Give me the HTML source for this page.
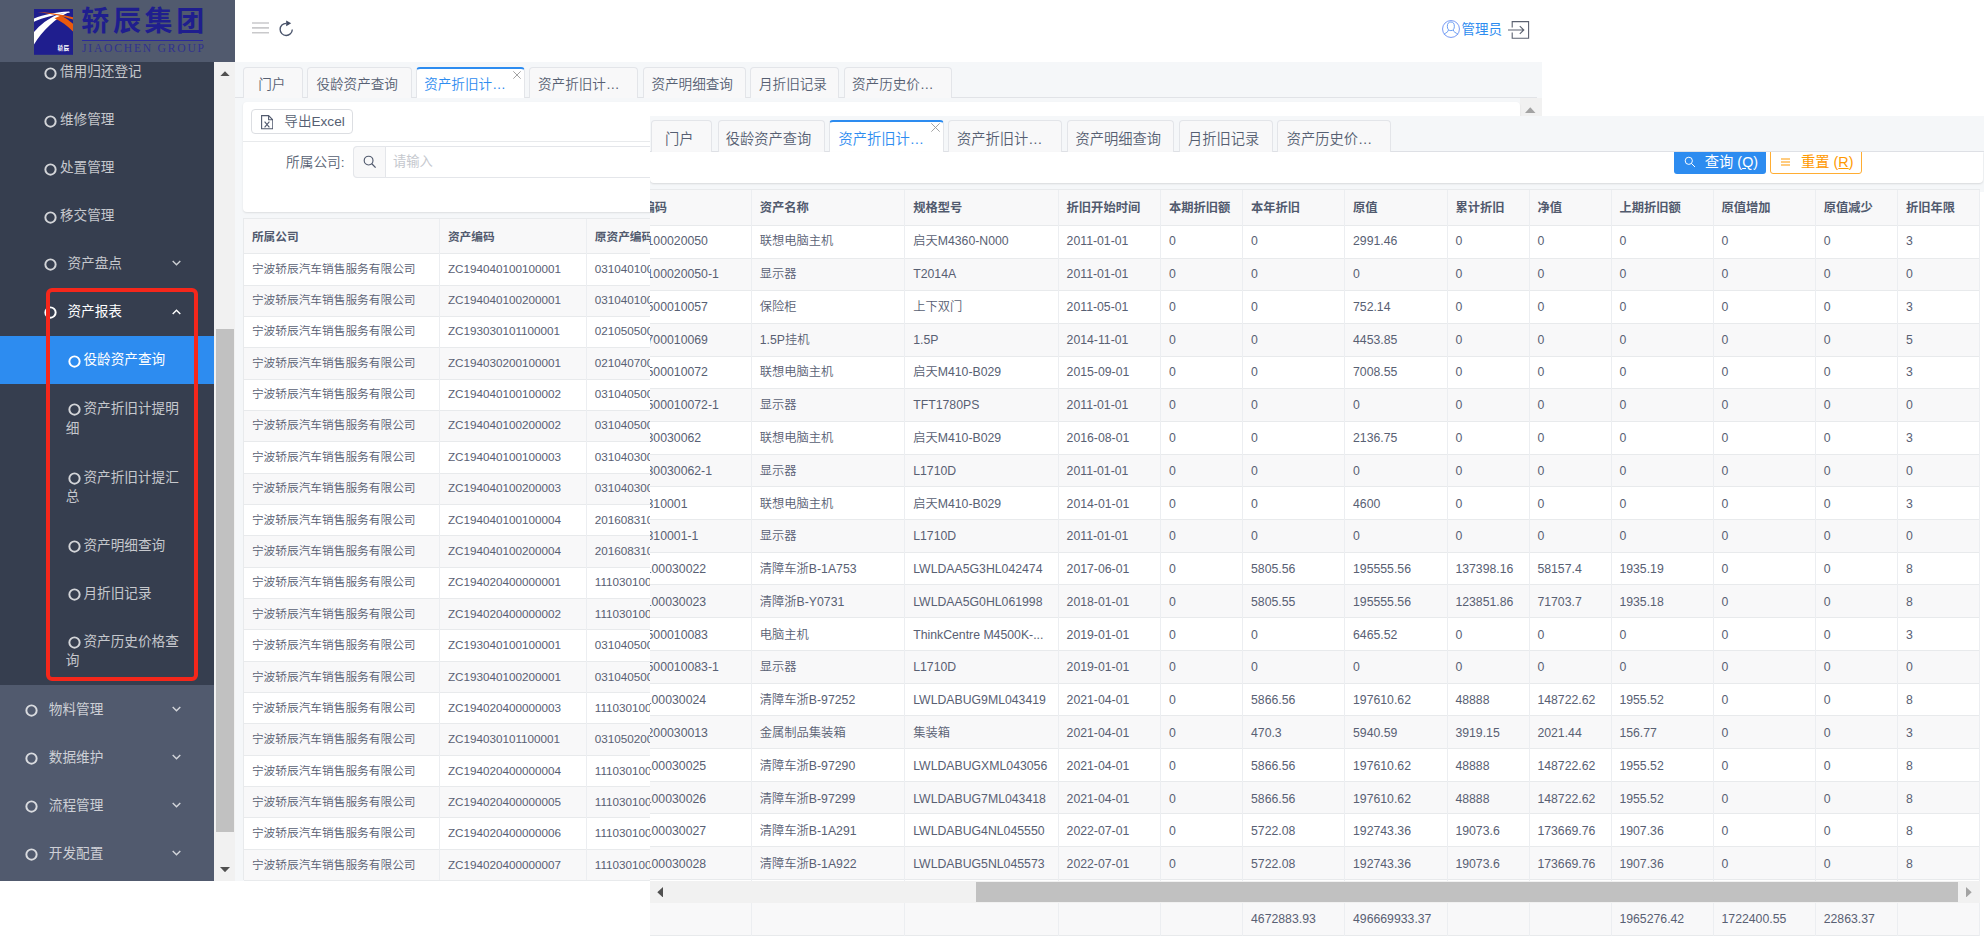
<!DOCTYPE html><html lang="zh-CN"><head><meta charset="utf-8"><title>资产折旧计提明细</title><style>
*{box-sizing:border-box;margin:0;padding:0}
html,body{width:1985px;height:938px;overflow:hidden;background:#fff}
body{position:relative;font-family:"Liberation Sans","Noto Sans CJK SC",sans-serif;color:#515a6e;-webkit-font-smoothing:antialiased}
.abs{position:absolute}
#L{position:absolute;left:0;top:0;width:1542px;height:880.6px;overflow:hidden;background:#f5f7f9}
#R{position:absolute;left:650px;top:116px;width:1334px;height:822px;overflow:hidden;background:#fff}
.lt{font-weight:350;color:#586073}
.lt b,.hd{font-weight:700;color:#515a6e}
.logo{position:absolute;left:0;top:0;width:235px;height:62px;background:#515a6e}
.side{position:absolute;left:0;top:62px;width:214.2px;height:819px;background:#363e4f;overflow:hidden}
.side .lv1bg{position:absolute;left:0;top:622.7px;width:100%;height:200px;background:#515a6e}
.mi{position:absolute;left:0;width:214.2px;color:rgba(255,255,255,.72);font-size:13.65px;line-height:20px;white-space:nowrap}
.mi .c{position:absolute;width:12px;height:12px;border:1.7px solid rgba(255,255,255,.75);border-radius:50%}
.mi .t{position:absolute}
.mi svg{position:absolute}
.sscroll{position:absolute;left:214.2px;top:62px;width:20.8px;height:819px;background:#f1f1f1}
.topbar{position:absolute;left:235px;top:0;width:1307px;height:62px;background:#fff}
.tabbar{position:absolute;background:#f5f7f9}
.tab{position:absolute;background:#f8f8f9;border:1px solid #e3e5e9;border-bottom:none;border-radius:4px 4px 0 0;color:#565f72;font-weight:350;white-space:nowrap}
.tab.on{background:#fff;color:#2d8cf0;border-color:#e3e5e9;border-top:2px solid #2d8cf0}
.tab span{position:absolute;top:0}
.cell{position:absolute;white-space:nowrap;overflow:hidden}
</style></head><body>
<div id="L">
<div class="logo">
<svg class="abs" style="left:34px;top:8.8px" width="39.4" height="45.8" viewBox="0 0 39.4 45.8">
<rect width="39.4" height="45.8" fill="#1f1e8e"/>
<path d="M0 23 C6 16 14 9.5 24 5.5 L36 2.8 C22 8.5 8 22 0 35.5 Z" fill="#fff"/>
<path d="M0 9.6 C10 5.5 22 3.4 35 2.6 L36 3.4 C22 5 9 8.5 0 12.8 Z" fill="#fff"/>
<path d="M3.4 3 C14 3.4 28 5.4 39.4 8.4 L39.4 10.6 C30 7.6 18 5 3.4 3Z" fill="#ea5a0c"/>
<path d="M20.5 9.2 L27 6.4 C32 9 36 12 39.4 15.2 L39.4 23 C34 17 27 12 20.5 9.2 Z" fill="#ea5a0c"/>
<text x="23.6" y="40.8" font-size="5.6" font-weight="700" fill="#fff" font-family='"Liberation Sans","Noto Sans CJK SC",sans-serif' textLength="11.5">轿辰</text>
</svg>
<div class="abs" style="left:81.2px;top:3.2px;width:130px;height:38px;font-family:&quot;Liberation Sans&quot;,&quot;Noto Sans CJK SC&quot;,sans-serif;font-weight:700;font-size:28px;line-height:38px;color:#1f1e8e;letter-spacing:3.7px;white-space:nowrap">轿辰集团</div>
<div class="abs" style="left:82px;top:40.2px;width:121px;height:0.8px;background:#2a2a9a"></div>
<div class="abs" style="left:82px;top:42.1px;width:130px;height:14px;font-family:&quot;Liberation Serif&quot;,serif;font-size:11.6px;line-height:14px;color:#2b2b96;letter-spacing:1.78px;white-space:nowrap;opacity:.85">JIAOCHEN GROUP</div>
</div>
<div class="side"><div class="lv1bg"></div>
<div class="mi" style="top:-14.5px;height:48.0px;"><svg style="left:44.4px;top:19.1px" width="13" height="13" viewBox="0 0 13 13"><circle cx="6.5" cy="6.5" r="5.15" fill="none" stroke="rgba(255,255,255,.78)" stroke-width="1.95"/></svg><span class="t" style="left:59.9px;top:14.8px">借用归还登记</span></div>
<div class="mi" style="top:33.5px;height:48.0px;"><svg style="left:44.4px;top:19.1px" width="13" height="13" viewBox="0 0 13 13"><circle cx="6.5" cy="6.5" r="5.15" fill="none" stroke="rgba(255,255,255,.78)" stroke-width="1.95"/></svg><span class="t" style="left:59.9px;top:14.8px">维修管理</span></div>
<div class="mi" style="top:81.5px;height:48.0px;"><svg style="left:44.4px;top:19.1px" width="13" height="13" viewBox="0 0 13 13"><circle cx="6.5" cy="6.5" r="5.15" fill="none" stroke="rgba(255,255,255,.78)" stroke-width="1.95"/></svg><span class="t" style="left:59.9px;top:14.8px">处置管理</span></div>
<div class="mi" style="top:129.5px;height:48.0px;"><svg style="left:44.4px;top:19.1px" width="13" height="13" viewBox="0 0 13 13"><circle cx="6.5" cy="6.5" r="5.15" fill="none" stroke="rgba(255,255,255,.78)" stroke-width="1.95"/></svg><span class="t" style="left:59.9px;top:14.8px">移交管理</span></div>
<div class="mi" style="top:177.5px;height:48.0px;"><svg style="left:44.2px;top:18.8px" width="13" height="13" viewBox="0 0 13 13"><circle cx="6.5" cy="6.5" r="5.15" fill="none" stroke="rgba(255,255,255,.78)" stroke-width="1.95"/></svg><span class="t" style="left:67.4px;top:14.8px">资产盘点</span><svg style="left:171.6px;top:20.8px" width="9" height="6" viewBox="0 0 9 6"><path d="M0.7 0.9 L4.5 4.7 L8.3 0.9" fill="none" stroke="rgba(255,255,255,.75)" stroke-width="1.4"/></svg></div>
<div class="mi" style="top:225.5px;height:48.0px;color:#fff"><svg style="left:44.2px;top:18.8px" width="13" height="13" viewBox="0 0 13 13"><circle cx="6.5" cy="6.5" r="5.15" fill="none" stroke="#fff" stroke-width="1.95"/></svg><span class="t" style="left:67.4px;top:14.8px">资产报表</span><svg style="left:171.6px;top:21.3px" width="9" height="6" viewBox="0 0 9 6"><path d="M0.7 5.1 L4.5 1.3 L8.3 5.1" fill="none" stroke="#fff" stroke-width="1.4"/></svg></div>
<div class="mi" style="top:273.7px;height:48.2px;background:#2d8cf0;color:#fff;"><svg style="left:67.5px;top:19.1px" width="13" height="13" viewBox="0 0 13 13"><circle cx="6.5" cy="6.5" r="5.15" fill="none" stroke="#fff" stroke-width="1.95"/></svg><span class="t" style="left:83.4px;top:14.8px">役龄资产查询</span></div>
<div class="mi" style="top:322.2px;height:68.0px;"><svg style="left:67.5px;top:19.1px" width="13" height="13" viewBox="0 0 13 13"><circle cx="6.5" cy="6.5" r="5.15" fill="none" stroke="rgba(255,255,255,.78)" stroke-width="1.95"/></svg><span class="t" style="left:83.4px;top:14.8px">资产折旧计提明</span><span class="t" style="left:65.7px;top:34.4px">细</span></div>
<div class="mi" style="top:390.8px;height:68.0px;"><svg style="left:67.5px;top:19.1px" width="13" height="13" viewBox="0 0 13 13"><circle cx="6.5" cy="6.5" r="5.15" fill="none" stroke="rgba(255,255,255,.78)" stroke-width="1.95"/></svg><span class="t" style="left:83.4px;top:14.8px">资产折旧计提汇</span><span class="t" style="left:65.7px;top:34.4px">总</span></div>
<div class="mi" style="top:459.4px;height:48.0px;"><svg style="left:67.5px;top:19.1px" width="13" height="13" viewBox="0 0 13 13"><circle cx="6.5" cy="6.5" r="5.15" fill="none" stroke="rgba(255,255,255,.78)" stroke-width="1.95"/></svg><span class="t" style="left:83.4px;top:14.8px">资产明细查询</span></div>
<div class="mi" style="top:507.2px;height:48.0px;"><svg style="left:67.5px;top:19.1px" width="13" height="13" viewBox="0 0 13 13"><circle cx="6.5" cy="6.5" r="5.15" fill="none" stroke="rgba(255,255,255,.78)" stroke-width="1.95"/></svg><span class="t" style="left:83.4px;top:14.8px">月折旧记录</span></div>
<div class="mi" style="top:555.1px;height:68.0px;"><svg style="left:67.5px;top:19.1px" width="13" height="13" viewBox="0 0 13 13"><circle cx="6.5" cy="6.5" r="5.15" fill="none" stroke="rgba(255,255,255,.78)" stroke-width="1.95"/></svg><span class="t" style="left:83.4px;top:14.8px">资产历史价格查</span><span class="t" style="left:65.7px;top:34.4px">询</span></div>
<div class="mi" style="top:623.2px;height:48.0px;"><svg style="left:25.3px;top:19.1px" width="13" height="13" viewBox="0 0 13 13"><circle cx="6.5" cy="6.5" r="5.15" fill="none" stroke="rgba(255,255,255,.78)" stroke-width="1.95"/></svg><span class="t" style="left:48.8px;top:14.6px">物料管理</span><svg style="left:171.6px;top:21.2px" width="9" height="6" viewBox="0 0 9 6"><path d="M0.7 0.9 L4.5 4.7 L8.3 0.9" fill="none" stroke="rgba(255,255,255,.75)" stroke-width="1.4"/></svg></div>
<div class="mi" style="top:671.2px;height:48.0px;"><svg style="left:25.3px;top:19.1px" width="13" height="13" viewBox="0 0 13 13"><circle cx="6.5" cy="6.5" r="5.15" fill="none" stroke="rgba(255,255,255,.78)" stroke-width="1.95"/></svg><span class="t" style="left:48.8px;top:14.6px">数据维护</span><svg style="left:171.6px;top:21.2px" width="9" height="6" viewBox="0 0 9 6"><path d="M0.7 0.9 L4.5 4.7 L8.3 0.9" fill="none" stroke="rgba(255,255,255,.75)" stroke-width="1.4"/></svg></div>
<div class="mi" style="top:719.2px;height:48.0px;"><svg style="left:25.3px;top:19.1px" width="13" height="13" viewBox="0 0 13 13"><circle cx="6.5" cy="6.5" r="5.15" fill="none" stroke="rgba(255,255,255,.78)" stroke-width="1.95"/></svg><span class="t" style="left:48.8px;top:14.6px">流程管理</span><svg style="left:171.6px;top:21.2px" width="9" height="6" viewBox="0 0 9 6"><path d="M0.7 0.9 L4.5 4.7 L8.3 0.9" fill="none" stroke="rgba(255,255,255,.75)" stroke-width="1.4"/></svg></div>
<div class="mi" style="top:767.2px;height:48.0px;"><svg style="left:25.3px;top:19.1px" width="13" height="13" viewBox="0 0 13 13"><circle cx="6.5" cy="6.5" r="5.15" fill="none" stroke="rgba(255,255,255,.78)" stroke-width="1.95"/></svg><span class="t" style="left:48.8px;top:14.6px">开发配置</span><svg style="left:171.6px;top:21.2px" width="9" height="6" viewBox="0 0 9 6"><path d="M0.7 0.9 L4.5 4.7 L8.3 0.9" fill="none" stroke="rgba(255,255,255,.75)" stroke-width="1.4"/></svg></div>
<div class="abs" style="left:46.2px;top:226.4px;width:151.4px;height:392.8px;border:4px solid #f5271b;border-radius:6px"></div>
</div>
<div class="sscroll">
<div class="abs" style="left:1.8px;top:267px;width:17.6px;height:503px;background:#c1c1c1"></div>
<svg class="abs" style="left:5.6px;top:8.7px" width="10" height="5.4"><path d="M0 5.4 L5 0.2 L10 5.4Z" fill="#505050"/></svg>
<svg class="abs" style="left:5.6px;top:804.8px" width="10" height="5.4"><path d="M0 0 L5 5.2 L10 0Z" fill="#505050"/></svg>
</div>
<div class="topbar">
<svg class="abs" style="left:16.9px;top:22.4px" width="17.3" height="12" viewBox="0 0 17.3 12"><path d="M0 1 H17.3 M0 5.85 H17.3 M0 10.8 H17.3" stroke="#c9c9cb" stroke-width="1.6"/></svg>
<svg class="abs" style="left:40px;top:14px" width="24" height="30" viewBox="275 14 24 30"><path d="M286.2 23.3 A6.1 6.1 0 1 0 292.3 29.6" fill="none" stroke="#4a546b" stroke-width="1.35"/><path d="M286.2 20.4 L286.2 26.3 L291.2 23.35Z" fill="#414b63"/></svg>
<svg class="abs" style="left:1206.9px;top:20px" width="18" height="18" viewBox="0 0 18 18"><circle cx="9" cy="9" r="8.45" fill="none" stroke="#6a8ef2" stroke-width="0.9"/><ellipse cx="8.85" cy="6.3" rx="3.5" ry="4.3" fill="none" stroke="#5b93f2" stroke-width="0.9"/><path d="M6.4 10 C6.4 12 4 12.6 1.9 14.4 M11.3 10 C11.3 12 13.8 12.6 16.1 14.4" fill="none" stroke="#5b93f2" stroke-width="0.9"/></svg>
<div class="abs" style="left:1226.6px;top:20px;font-size:13.5px;line-height:20px;color:#2d8cf0;white-space:nowrap">管理员</div>
<svg class="abs" style="left:1273px;top:21px" width="22" height="18" viewBox="0 0 22 18"><path d="M4.2 6.5 V0.6 H20.6 V17.2 H4.2 V11.6" fill="none" stroke="#5b6170" stroke-width="1.1"/><path d="M0 9 H15.6 M11.8 5.2 L15.8 9 L11.8 12.8" fill="none" stroke="#5b6170" stroke-width="1.1"/></svg>
</div>
<div class="tabbar" style="left:235px;top:62px;width:1307px;height:39.8px">
<div class="abs" style="left:0;top:35.2px;width:1302px;height:1px;background:#e1e3e7"></div>
<div class="tab" style="left:8.0px;top:5.3px;width:60.3px;height:30.4px;font-size:13.6px;line-height:20px"><span style="left:14.2px;top:6.9px">门户</span></div>
<div class="tab" style="left:72.1px;top:5.3px;width:104.7px;height:30.4px;font-size:13.6px;line-height:20px"><span style="left:8.3px;top:6.9px">役龄资产查询</span></div>
<div class="tab on" style="left:180.5px;top:5.3px;width:109.5px;height:30.4px;font-size:13.6px;line-height:20px"><span style="left:7.7px;top:5.9px">资产折旧计…</span><svg class="abs" style="left:96.5px;top:1.6px" width="8" height="8" viewBox="0 0 8 8"><path d="M0.3 0.3 L7.7 7.7 M7.7 0.3 L0.3 7.7" stroke="#999" stroke-width="0.9"/></svg></div>
<div class="tab" style="left:294.3px;top:5.3px;width:108.7px;height:30.4px;font-size:13.6px;line-height:20px"><span style="left:7.7px;top:6.9px">资产折旧计…</span></div>
<div class="tab" style="left:407.5px;top:5.3px;width:103.3px;height:30.4px;font-size:13.6px;line-height:20px"><span style="left:7.9px;top:6.9px">资产明细查询</span></div>
<div class="tab" style="left:515.3px;top:5.3px;width:89.2px;height:30.4px;font-size:13.6px;line-height:20px"><span style="left:7.7px;top:6.9px">月折旧记录</span></div>
<div class="tab" style="left:608.8px;top:5.3px;width:108.5px;height:30.4px;font-size:13.6px;line-height:20px"><span style="left:7.2px;top:6.9px">资产历史价…</span></div>
</div>
<div class="abs" style="left:1520px;top:98px;width:22px;height:790px;background:#f1f1f1"></div>
<svg class="abs" style="left:1525.3px;top:106.5px" width="10.5" height="6"><path d="M0 6 L5.25 0.3 L10.5 6Z" fill="#a3a3a3"/></svg>
<div class="abs" style="left:243px;top:101.8px;width:1277px;height:110.6px;background:#fff;border-radius:4px;box-shadow:0 1px 2px rgba(0,0,0,.10)">
<div class="abs" style="left:8.2px;top:7.6px;width:101.5px;height:24.4px;border:1px solid #dcdee2;border-radius:4px;background:#fff"></div>
<svg class="abs" style="left:18px;top:13.4px" width="12.4" height="14.4" viewBox="0 0 12.4 14.4"><path d="M0.6 0.6 H7.6 L11.8 4.8 V13.8 H0.6Z M7.6 0.6 V4.8 H11.8" fill="none" stroke="#515a6e" stroke-width="1.1"/><path d="M3.6 6.6 L8.4 12.4 M8.4 6.6 L3.6 12.4" stroke="#515a6e" stroke-width="1.1"/></svg>
<div class="abs" style="left:41.3px;top:10.3px;font-size:13.6px;line-height:20px;color:#565f72;font-weight:350;white-space:nowrap">导出Excel</div>
<div class="abs" style="left:0;top:39.3px;width:100%;height:1px;background:#e8eaec"></div>
<div class="abs" style="left:43px;top:51px;font-size:13.7px;line-height:20px;color:#565f72;font-weight:350;white-space:nowrap">所属公司:</div>
<div class="abs" style="left:110px;top:44.2px;width:420px;height:31.6px;border:1px solid #e4e6ea;border-radius:4px;background:#fff"></div>
<div class="abs" style="left:110px;top:44.2px;width:32.6px;height:31.6px;border:1px solid #e4e6ea;border-radius:4px 0 0 4px;background:#f8f8f9"></div>
<svg class="abs" style="left:119.5px;top:52.8px" width="14" height="14" viewBox="0 0 14 14"><circle cx="5.6" cy="5.6" r="4.4" fill="none" stroke="#515a6e" stroke-width="1.15"/><path d="M8.8 8.8 L12.6 12.6" stroke="#515a6e" stroke-width="1.3"/></svg>
<div class="abs" style="left:150px;top:50px;font-size:13.3px;line-height:20px;color:#c5c8ce;white-space:nowrap">请输入</div>
</div>
<div class="abs lt" style="left:243.2px;top:218.4px;width:1276px;height:662px;background:#fff;border-left:1px solid #e8eaec;border-top:1px solid #e8eaec;font-size:11.7px">
<div class="abs" style="left:0;top:0;width:100%;height:35.0px;background:#f8f8f9;border-bottom:1px solid #e8eaec"></div>
<div class="cell" style="left:-0.5px;top:0;width:196.0px;height:35.0px;line-height:35.0px;font-weight:700;color:#515a6e;padding-left:8.2px">所属公司</div>
<div class="cell" style="left:195.5px;top:0;width:146.9px;height:35.0px;line-height:35.0px;font-weight:700;color:#515a6e;padding-left:8.2px">资产编码</div>
<div class="cell" style="left:342.4px;top:0;width:146.4px;height:35.0px;line-height:35.0px;font-weight:700;color:#515a6e;padding-left:8.2px">原资产编码</div>
<div class="abs" style="left:0;top:35.00px;width:100%;height:31.34px;background:#fff;border-bottom:1px solid #e8eaec"></div>
<div class="cell" style="left:-0.5px;top:39.20px;width:196.0px;height:20.00px;line-height:20.00px;padding-left:8.2px">宁波轿辰汽车销售服务有限公司</div>
<div class="cell" style="left:195.5px;top:39.20px;width:146.9px;height:20.00px;line-height:20.00px;padding-left:8.2px">ZC194040100100001</div>
<div class="cell" style="left:342.4px;top:39.20px;width:146.4px;height:20.00px;line-height:20.00px;padding-left:8.2px">031040100020050</div>
<div class="abs" style="left:0;top:66.34px;width:100%;height:31.34px;background:#f8f8f9;border-bottom:1px solid #e8eaec"></div>
<div class="cell" style="left:-0.5px;top:70.58px;width:196.0px;height:20.00px;line-height:20.00px;padding-left:8.2px">宁波轿辰汽车销售服务有限公司</div>
<div class="cell" style="left:195.5px;top:70.58px;width:146.9px;height:20.00px;line-height:20.00px;padding-left:8.2px">ZC194040100200001</div>
<div class="cell" style="left:342.4px;top:70.58px;width:146.4px;height:20.00px;line-height:20.00px;padding-left:8.2px">031040100020050-1</div>
<div class="abs" style="left:0;top:97.68px;width:100%;height:31.34px;background:#fff;border-bottom:1px solid #e8eaec"></div>
<div class="cell" style="left:-0.5px;top:101.96px;width:196.0px;height:20.00px;line-height:20.00px;padding-left:8.2px">宁波轿辰汽车销售服务有限公司</div>
<div class="cell" style="left:195.5px;top:101.96px;width:146.9px;height:20.00px;line-height:20.00px;padding-left:8.2px">ZC193030101100001</div>
<div class="cell" style="left:342.4px;top:101.96px;width:146.4px;height:20.00px;line-height:20.00px;padding-left:8.2px">021050500010057</div>
<div class="abs" style="left:0;top:129.02px;width:100%;height:31.34px;background:#f8f8f9;border-bottom:1px solid #e8eaec"></div>
<div class="cell" style="left:-0.5px;top:133.34px;width:196.0px;height:20.00px;line-height:20.00px;padding-left:8.2px">宁波轿辰汽车销售服务有限公司</div>
<div class="cell" style="left:195.5px;top:133.34px;width:146.9px;height:20.00px;line-height:20.00px;padding-left:8.2px">ZC194030200100001</div>
<div class="cell" style="left:342.4px;top:133.34px;width:146.4px;height:20.00px;line-height:20.00px;padding-left:8.2px">021040700010069</div>
<div class="abs" style="left:0;top:160.36px;width:100%;height:31.34px;background:#fff;border-bottom:1px solid #e8eaec"></div>
<div class="cell" style="left:-0.5px;top:164.72px;width:196.0px;height:20.00px;line-height:20.00px;padding-left:8.2px">宁波轿辰汽车销售服务有限公司</div>
<div class="cell" style="left:195.5px;top:164.72px;width:146.9px;height:20.00px;line-height:20.00px;padding-left:8.2px">ZC194040100100002</div>
<div class="cell" style="left:342.4px;top:164.72px;width:146.4px;height:20.00px;line-height:20.00px;padding-left:8.2px">031040500010072</div>
<div class="abs" style="left:0;top:191.70px;width:100%;height:31.34px;background:#f8f8f9;border-bottom:1px solid #e8eaec"></div>
<div class="cell" style="left:-0.5px;top:196.10px;width:196.0px;height:20.00px;line-height:20.00px;padding-left:8.2px">宁波轿辰汽车销售服务有限公司</div>
<div class="cell" style="left:195.5px;top:196.10px;width:146.9px;height:20.00px;line-height:20.00px;padding-left:8.2px">ZC194040100200002</div>
<div class="cell" style="left:342.4px;top:196.10px;width:146.4px;height:20.00px;line-height:20.00px;padding-left:8.2px">031040500010072-1</div>
<div class="abs" style="left:0;top:223.04px;width:100%;height:31.34px;background:#fff;border-bottom:1px solid #e8eaec"></div>
<div class="cell" style="left:-0.5px;top:227.48px;width:196.0px;height:20.00px;line-height:20.00px;padding-left:8.2px">宁波轿辰汽车销售服务有限公司</div>
<div class="cell" style="left:195.5px;top:227.48px;width:146.9px;height:20.00px;line-height:20.00px;padding-left:8.2px">ZC194040100100003</div>
<div class="cell" style="left:342.4px;top:227.48px;width:146.4px;height:20.00px;line-height:20.00px;padding-left:8.2px">03104030030062</div>
<div class="abs" style="left:0;top:254.38px;width:100%;height:31.34px;background:#f8f8f9;border-bottom:1px solid #e8eaec"></div>
<div class="cell" style="left:-0.5px;top:258.86px;width:196.0px;height:20.00px;line-height:20.00px;padding-left:8.2px">宁波轿辰汽车销售服务有限公司</div>
<div class="cell" style="left:195.5px;top:258.86px;width:146.9px;height:20.00px;line-height:20.00px;padding-left:8.2px">ZC194040100200003</div>
<div class="cell" style="left:342.4px;top:258.86px;width:146.4px;height:20.00px;line-height:20.00px;padding-left:8.2px">03104030030062-1</div>
<div class="abs" style="left:0;top:285.72px;width:100%;height:31.34px;background:#fff;border-bottom:1px solid #e8eaec"></div>
<div class="cell" style="left:-0.5px;top:290.24px;width:196.0px;height:20.00px;line-height:20.00px;padding-left:8.2px">宁波轿辰汽车销售服务有限公司</div>
<div class="cell" style="left:195.5px;top:290.24px;width:146.9px;height:20.00px;line-height:20.00px;padding-left:8.2px">ZC194040100100004</div>
<div class="cell" style="left:342.4px;top:290.24px;width:146.4px;height:20.00px;line-height:20.00px;padding-left:8.2px">201608310001</div>
<div class="abs" style="left:0;top:317.06px;width:100%;height:31.34px;background:#f8f8f9;border-bottom:1px solid #e8eaec"></div>
<div class="cell" style="left:-0.5px;top:321.62px;width:196.0px;height:20.00px;line-height:20.00px;padding-left:8.2px">宁波轿辰汽车销售服务有限公司</div>
<div class="cell" style="left:195.5px;top:321.62px;width:146.9px;height:20.00px;line-height:20.00px;padding-left:8.2px">ZC194040100200004</div>
<div class="cell" style="left:342.4px;top:321.62px;width:146.4px;height:20.00px;line-height:20.00px;padding-left:8.2px">201608310001-1</div>
<div class="abs" style="left:0;top:348.40px;width:100%;height:31.34px;background:#fff;border-bottom:1px solid #e8eaec"></div>
<div class="cell" style="left:-0.5px;top:353.00px;width:196.0px;height:20.00px;line-height:20.00px;padding-left:8.2px">宁波轿辰汽车销售服务有限公司</div>
<div class="cell" style="left:195.5px;top:353.00px;width:146.9px;height:20.00px;line-height:20.00px;padding-left:8.2px">ZC194020400000001</div>
<div class="cell" style="left:342.4px;top:353.00px;width:146.4px;height:20.00px;line-height:20.00px;padding-left:8.2px">111030100030022</div>
<div class="abs" style="left:0;top:379.74px;width:100%;height:31.34px;background:#f8f8f9;border-bottom:1px solid #e8eaec"></div>
<div class="cell" style="left:-0.5px;top:384.38px;width:196.0px;height:20.00px;line-height:20.00px;padding-left:8.2px">宁波轿辰汽车销售服务有限公司</div>
<div class="cell" style="left:195.5px;top:384.38px;width:146.9px;height:20.00px;line-height:20.00px;padding-left:8.2px">ZC194020400000002</div>
<div class="cell" style="left:342.4px;top:384.38px;width:146.4px;height:20.00px;line-height:20.00px;padding-left:8.2px">111030100030023</div>
<div class="abs" style="left:0;top:411.08px;width:100%;height:31.34px;background:#fff;border-bottom:1px solid #e8eaec"></div>
<div class="cell" style="left:-0.5px;top:415.76px;width:196.0px;height:20.00px;line-height:20.00px;padding-left:8.2px">宁波轿辰汽车销售服务有限公司</div>
<div class="cell" style="left:195.5px;top:415.76px;width:146.9px;height:20.00px;line-height:20.00px;padding-left:8.2px">ZC193040100100001</div>
<div class="cell" style="left:342.4px;top:415.76px;width:146.4px;height:20.00px;line-height:20.00px;padding-left:8.2px">031040500010083</div>
<div class="abs" style="left:0;top:442.42px;width:100%;height:31.34px;background:#f8f8f9;border-bottom:1px solid #e8eaec"></div>
<div class="cell" style="left:-0.5px;top:447.14px;width:196.0px;height:20.00px;line-height:20.00px;padding-left:8.2px">宁波轿辰汽车销售服务有限公司</div>
<div class="cell" style="left:195.5px;top:447.14px;width:146.9px;height:20.00px;line-height:20.00px;padding-left:8.2px">ZC193040100200001</div>
<div class="cell" style="left:342.4px;top:447.14px;width:146.4px;height:20.00px;line-height:20.00px;padding-left:8.2px">031040500010083-1</div>
<div class="abs" style="left:0;top:473.76px;width:100%;height:31.34px;background:#fff;border-bottom:1px solid #e8eaec"></div>
<div class="cell" style="left:-0.5px;top:478.52px;width:196.0px;height:20.00px;line-height:20.00px;padding-left:8.2px">宁波轿辰汽车销售服务有限公司</div>
<div class="cell" style="left:195.5px;top:478.52px;width:146.9px;height:20.00px;line-height:20.00px;padding-left:8.2px">ZC194020400000003</div>
<div class="cell" style="left:342.4px;top:478.52px;width:146.4px;height:20.00px;line-height:20.00px;padding-left:8.2px">111030100030024</div>
<div class="abs" style="left:0;top:505.10px;width:100%;height:31.34px;background:#f8f8f9;border-bottom:1px solid #e8eaec"></div>
<div class="cell" style="left:-0.5px;top:509.90px;width:196.0px;height:20.00px;line-height:20.00px;padding-left:8.2px">宁波轿辰汽车销售服务有限公司</div>
<div class="cell" style="left:195.5px;top:509.90px;width:146.9px;height:20.00px;line-height:20.00px;padding-left:8.2px">ZC194030101100001</div>
<div class="cell" style="left:342.4px;top:509.90px;width:146.4px;height:20.00px;line-height:20.00px;padding-left:8.2px">031050200030013</div>
<div class="abs" style="left:0;top:536.44px;width:100%;height:31.34px;background:#fff;border-bottom:1px solid #e8eaec"></div>
<div class="cell" style="left:-0.5px;top:541.28px;width:196.0px;height:20.00px;line-height:20.00px;padding-left:8.2px">宁波轿辰汽车销售服务有限公司</div>
<div class="cell" style="left:195.5px;top:541.28px;width:146.9px;height:20.00px;line-height:20.00px;padding-left:8.2px">ZC194020400000004</div>
<div class="cell" style="left:342.4px;top:541.28px;width:146.4px;height:20.00px;line-height:20.00px;padding-left:8.2px">111030100030025</div>
<div class="abs" style="left:0;top:567.78px;width:100%;height:31.34px;background:#f8f8f9;border-bottom:1px solid #e8eaec"></div>
<div class="cell" style="left:-0.5px;top:572.66px;width:196.0px;height:20.00px;line-height:20.00px;padding-left:8.2px">宁波轿辰汽车销售服务有限公司</div>
<div class="cell" style="left:195.5px;top:572.66px;width:146.9px;height:20.00px;line-height:20.00px;padding-left:8.2px">ZC194020400000005</div>
<div class="cell" style="left:342.4px;top:572.66px;width:146.4px;height:20.00px;line-height:20.00px;padding-left:8.2px">111030100030026</div>
<div class="abs" style="left:0;top:599.12px;width:100%;height:31.34px;background:#fff;border-bottom:1px solid #e8eaec"></div>
<div class="cell" style="left:-0.5px;top:604.04px;width:196.0px;height:20.00px;line-height:20.00px;padding-left:8.2px">宁波轿辰汽车销售服务有限公司</div>
<div class="cell" style="left:195.5px;top:604.04px;width:146.9px;height:20.00px;line-height:20.00px;padding-left:8.2px">ZC194020400000006</div>
<div class="cell" style="left:342.4px;top:604.04px;width:146.4px;height:20.00px;line-height:20.00px;padding-left:8.2px">111030100030027</div>
<div class="abs" style="left:0;top:630.46px;width:100%;height:31.34px;background:#f8f8f9;border-bottom:1px solid #e8eaec"></div>
<div class="cell" style="left:-0.5px;top:635.42px;width:196.0px;height:20.00px;line-height:20.00px;padding-left:8.2px">宁波轿辰汽车销售服务有限公司</div>
<div class="cell" style="left:195.5px;top:635.42px;width:146.9px;height:20.00px;line-height:20.00px;padding-left:8.2px">ZC194020400000007</div>
<div class="cell" style="left:342.4px;top:635.42px;width:146.4px;height:20.00px;line-height:20.00px;padding-left:8.2px">111030100030028</div>
<div class="abs" style="left:195.0px;top:0;width:1px;height:100%;background:#eceef1"></div>
<div class="abs" style="left:341.9px;top:0;width:1px;height:100%;background:#eceef1"></div>
<div class="abs" style="left:488.3px;top:0;width:1px;height:100%;background:#eceef1"></div>
</div>
</div>
<div id="R">
<div class="tabbar" style="left:0;top:0;width:1335px;height:35.6px">
<div class="abs" style="left:0;top:35px;width:1335px;height:1px;background:#dfe1e6"></div>
<div class="tab" style="left:0.5px;top:3.8px;width:61.4px;height:31.9px;font-size:14.25px;line-height:20px"><span style="left:13.5px;top:8.4px">门户</span></div>
<div class="tab" style="left:67.5px;top:3.8px;width:107.0px;height:31.9px;font-size:14.25px;line-height:20px"><span style="left:7.3px;top:8.4px">役龄资产查询</span></div>
<div class="tab on" style="left:179.4px;top:3.8px;width:114.3px;height:31.9px;font-size:14.25px;line-height:20px"><span style="left:8.1px;top:7.4px">资产折旧计…</span><svg class="abs" style="left:100.6px;top:1.6px" width="9" height="9" viewBox="0 0 9 9"><path d="M0.3 0.3 L8.7 8.7 M8.7 0.3 L0.3 8.7" stroke="#999" stroke-width="0.9"/></svg></div>
<div class="tab" style="left:298.2px;top:3.8px;width:114.1px;height:31.9px;font-size:14.25px;line-height:20px"><span style="left:7.7px;top:8.4px">资产折旧计…</span></div>
<div class="tab" style="left:416.6px;top:3.8px;width:107.7px;height:31.9px;font-size:14.25px;line-height:20px"><span style="left:8.0px;top:8.4px">资产明细查询</span></div>
<div class="tab" style="left:528.6px;top:3.8px;width:94.1px;height:31.9px;font-size:14.25px;line-height:20px"><span style="left:8.4px;top:8.4px">月折旧记录</span></div>
<div class="tab" style="left:626.7px;top:3.8px;width:114.8px;height:31.9px;font-size:14.25px;line-height:20px"><span style="left:9.0px;top:8.4px">资产历史价…</span></div>
</div>
<div class="abs" style="left:0;top:35.6px;width:1335px;height:40px;background:#f5f7f9"></div>
<div class="abs" style="left:0;top:35.6px;width:1333.3px;height:31.4px;background:#fff;border-radius:0 0 4px 4px;box-shadow:0 1px 2px rgba(0,0,0,.12)"></div>
<div class="abs" style="left:1024.2px;top:33px;width:92.2px;height:24.8px;background:#2d8cf0;border-radius:3px"></div>
<svg class="abs" style="left:1034px;top:39.6px" width="12" height="12" viewBox="0 0 12 12"><circle cx="4.8" cy="4.8" r="3.6" fill="none" stroke="#fff" stroke-width="1"/><path d="M7.4 7.4 L11 11" stroke="#fff" stroke-width="1"/></svg>
<div class="abs" style="left:1054.8px;top:36px;font-size:14.3px;line-height:20px;color:#fff;white-space:nowrap">查询 (<u>Q</u>)</div>
<div class="abs" style="left:1120.4px;top:33px;width:91.8px;height:24.8px;background:#fff;border:1px solid #ffad33;border-radius:3px"></div>
<svg class="abs" style="left:1130.6px;top:41.5px" width="9" height="8" viewBox="0 0 9 8"><path d="M0 1 H9 M0 4 H9 M0 7 H9" stroke="#ff9900" stroke-width="1"/></svg>
<div class="abs" style="left:1151px;top:36px;font-size:14.3px;line-height:20px;color:#ff9900;white-space:nowrap">重置 (<u>R</u>)</div>
<div class="abs" style="left:1000px;top:30px;width:240px;height:5px;background:#f5f7f9"></div>
<div class="abs" style="left:1000px;top:35px;width:240px;height:1px;background:#dfe1e6"></div>
<div class="abs lt" style="left:0;top:73.4px;width:1329.9px;height:746.6px;background:#fff;border-top:1px solid #e8eaec;font-size:12.27px">
<div class="abs" style="left:0;top:0;width:100%;height:35.6px;background:#f8f8f9;border-bottom:1px solid #e8eaec"></div>
<div class="cell" style="left:-52.8px;top:0;width:154.2px;height:35.6px;line-height:37.2px;font-weight:700;color:#515a6e;padding-left:8.4px">原资产编码</div>
<div class="cell" style="left:101.4px;top:0;width:153.4px;height:35.6px;line-height:37.2px;font-weight:700;color:#515a6e;padding-left:8.4px">资产名称</div>
<div class="cell" style="left:254.8px;top:0;width:153.4px;height:35.6px;line-height:37.2px;font-weight:700;color:#515a6e;padding-left:8.4px">规格型号</div>
<div class="cell" style="left:408.2px;top:0;width:102.3px;height:35.6px;line-height:37.2px;font-weight:700;color:#515a6e;padding-left:8.4px">折旧开始时间</div>
<div class="cell" style="left:510.5px;top:0;width:82.1px;height:35.6px;line-height:37.2px;font-weight:700;color:#515a6e;padding-left:8.4px">本期折旧额</div>
<div class="cell" style="left:592.6px;top:0;width:102.0px;height:35.6px;line-height:37.2px;font-weight:700;color:#515a6e;padding-left:8.4px">本年折旧</div>
<div class="cell" style="left:694.6px;top:0;width:102.4px;height:35.6px;line-height:37.2px;font-weight:700;color:#515a6e;padding-left:8.4px">原值</div>
<div class="cell" style="left:797.0px;top:0;width:82.0px;height:35.6px;line-height:37.2px;font-weight:700;color:#515a6e;padding-left:8.4px">累计折旧</div>
<div class="cell" style="left:879.0px;top:0;width:82.0px;height:35.6px;line-height:37.2px;font-weight:700;color:#515a6e;padding-left:8.4px">净值</div>
<div class="cell" style="left:961.0px;top:0;width:102.1px;height:35.6px;line-height:37.2px;font-weight:700;color:#515a6e;padding-left:8.4px">上期折旧额</div>
<div class="cell" style="left:1063.1px;top:0;width:102.2px;height:35.6px;line-height:37.2px;font-weight:700;color:#515a6e;padding-left:8.4px">原值增加</div>
<div class="cell" style="left:1165.3px;top:0;width:82.2px;height:35.6px;line-height:37.2px;font-weight:700;color:#515a6e;padding-left:8.4px">原值减少</div>
<div class="cell" style="left:1247.5px;top:0;width:81.9px;height:35.6px;line-height:37.2px;font-weight:700;color:#515a6e;padding-left:8.4px">折旧年限</div>
<div class="abs" style="left:0;top:35.60px;width:100%;height:32.68px;background:#fff;border-bottom:1px solid #e8eaec"></div>
<div class="cell" style="left:-52.8px;top:41.00px;width:150.2px;height:20.00px;line-height:20.00px;padding-left:8.4px">031040100020050</div>
<div class="cell" style="left:101.4px;top:41.00px;width:149.4px;height:20.00px;line-height:20.00px;padding-left:8.4px">联想电脑主机</div>
<div class="cell" style="left:254.8px;top:41.00px;width:149.4px;height:20.00px;line-height:20.00px;padding-left:8.4px">启天M4360-N000</div>
<div class="cell" style="left:408.2px;top:41.00px;width:98.3px;height:20.00px;line-height:20.00px;padding-left:8.4px">2011-01-01</div>
<div class="cell" style="left:510.5px;top:41.00px;width:78.1px;height:20.00px;line-height:20.00px;padding-left:8.4px">0</div>
<div class="cell" style="left:592.6px;top:41.00px;width:98.0px;height:20.00px;line-height:20.00px;padding-left:8.4px">0</div>
<div class="cell" style="left:694.6px;top:41.00px;width:98.4px;height:20.00px;line-height:20.00px;padding-left:8.4px">2991.46</div>
<div class="cell" style="left:797.0px;top:41.00px;width:78.0px;height:20.00px;line-height:20.00px;padding-left:8.4px">0</div>
<div class="cell" style="left:879.0px;top:41.00px;width:78.0px;height:20.00px;line-height:20.00px;padding-left:8.4px">0</div>
<div class="cell" style="left:961.0px;top:41.00px;width:98.1px;height:20.00px;line-height:20.00px;padding-left:8.4px">0</div>
<div class="cell" style="left:1063.1px;top:41.00px;width:98.2px;height:20.00px;line-height:20.00px;padding-left:8.4px">0</div>
<div class="cell" style="left:1165.3px;top:41.00px;width:78.2px;height:20.00px;line-height:20.00px;padding-left:8.4px">0</div>
<div class="cell" style="left:1247.5px;top:41.00px;width:77.9px;height:20.00px;line-height:20.00px;padding-left:8.4px">3</div>
<div class="abs" style="left:0;top:68.28px;width:100%;height:32.68px;background:#f8f8f9;border-bottom:1px solid #e8eaec"></div>
<div class="cell" style="left:-52.8px;top:73.77px;width:150.2px;height:20.00px;line-height:20.00px;padding-left:8.4px">031040100020050-1</div>
<div class="cell" style="left:101.4px;top:73.77px;width:149.4px;height:20.00px;line-height:20.00px;padding-left:8.4px">显示器</div>
<div class="cell" style="left:254.8px;top:73.77px;width:149.4px;height:20.00px;line-height:20.00px;padding-left:8.4px">T2014A</div>
<div class="cell" style="left:408.2px;top:73.77px;width:98.3px;height:20.00px;line-height:20.00px;padding-left:8.4px">2011-01-01</div>
<div class="cell" style="left:510.5px;top:73.77px;width:78.1px;height:20.00px;line-height:20.00px;padding-left:8.4px">0</div>
<div class="cell" style="left:592.6px;top:73.77px;width:98.0px;height:20.00px;line-height:20.00px;padding-left:8.4px">0</div>
<div class="cell" style="left:694.6px;top:73.77px;width:98.4px;height:20.00px;line-height:20.00px;padding-left:8.4px">0</div>
<div class="cell" style="left:797.0px;top:73.77px;width:78.0px;height:20.00px;line-height:20.00px;padding-left:8.4px">0</div>
<div class="cell" style="left:879.0px;top:73.77px;width:78.0px;height:20.00px;line-height:20.00px;padding-left:8.4px">0</div>
<div class="cell" style="left:961.0px;top:73.77px;width:98.1px;height:20.00px;line-height:20.00px;padding-left:8.4px">0</div>
<div class="cell" style="left:1063.1px;top:73.77px;width:98.2px;height:20.00px;line-height:20.00px;padding-left:8.4px">0</div>
<div class="cell" style="left:1165.3px;top:73.77px;width:78.2px;height:20.00px;line-height:20.00px;padding-left:8.4px">0</div>
<div class="cell" style="left:1247.5px;top:73.77px;width:77.9px;height:20.00px;line-height:20.00px;padding-left:8.4px">0</div>
<div class="abs" style="left:0;top:100.96px;width:100%;height:32.68px;background:#fff;border-bottom:1px solid #e8eaec"></div>
<div class="cell" style="left:-52.8px;top:106.55px;width:150.2px;height:20.00px;line-height:20.00px;padding-left:8.4px">021050500010057</div>
<div class="cell" style="left:101.4px;top:106.55px;width:149.4px;height:20.00px;line-height:20.00px;padding-left:8.4px">保险柜</div>
<div class="cell" style="left:254.8px;top:106.55px;width:149.4px;height:20.00px;line-height:20.00px;padding-left:8.4px">上下双门</div>
<div class="cell" style="left:408.2px;top:106.55px;width:98.3px;height:20.00px;line-height:20.00px;padding-left:8.4px">2011-05-01</div>
<div class="cell" style="left:510.5px;top:106.55px;width:78.1px;height:20.00px;line-height:20.00px;padding-left:8.4px">0</div>
<div class="cell" style="left:592.6px;top:106.55px;width:98.0px;height:20.00px;line-height:20.00px;padding-left:8.4px">0</div>
<div class="cell" style="left:694.6px;top:106.55px;width:98.4px;height:20.00px;line-height:20.00px;padding-left:8.4px">752.14</div>
<div class="cell" style="left:797.0px;top:106.55px;width:78.0px;height:20.00px;line-height:20.00px;padding-left:8.4px">0</div>
<div class="cell" style="left:879.0px;top:106.55px;width:78.0px;height:20.00px;line-height:20.00px;padding-left:8.4px">0</div>
<div class="cell" style="left:961.0px;top:106.55px;width:98.1px;height:20.00px;line-height:20.00px;padding-left:8.4px">0</div>
<div class="cell" style="left:1063.1px;top:106.55px;width:98.2px;height:20.00px;line-height:20.00px;padding-left:8.4px">0</div>
<div class="cell" style="left:1165.3px;top:106.55px;width:78.2px;height:20.00px;line-height:20.00px;padding-left:8.4px">0</div>
<div class="cell" style="left:1247.5px;top:106.55px;width:77.9px;height:20.00px;line-height:20.00px;padding-left:8.4px">3</div>
<div class="abs" style="left:0;top:133.64px;width:100%;height:32.68px;background:#f8f8f9;border-bottom:1px solid #e8eaec"></div>
<div class="cell" style="left:-52.8px;top:139.32px;width:150.2px;height:20.00px;line-height:20.00px;padding-left:8.4px">021040700010069</div>
<div class="cell" style="left:101.4px;top:139.32px;width:149.4px;height:20.00px;line-height:20.00px;padding-left:8.4px">1.5P挂机</div>
<div class="cell" style="left:254.8px;top:139.32px;width:149.4px;height:20.00px;line-height:20.00px;padding-left:8.4px">1.5P</div>
<div class="cell" style="left:408.2px;top:139.32px;width:98.3px;height:20.00px;line-height:20.00px;padding-left:8.4px">2014-11-01</div>
<div class="cell" style="left:510.5px;top:139.32px;width:78.1px;height:20.00px;line-height:20.00px;padding-left:8.4px">0</div>
<div class="cell" style="left:592.6px;top:139.32px;width:98.0px;height:20.00px;line-height:20.00px;padding-left:8.4px">0</div>
<div class="cell" style="left:694.6px;top:139.32px;width:98.4px;height:20.00px;line-height:20.00px;padding-left:8.4px">4453.85</div>
<div class="cell" style="left:797.0px;top:139.32px;width:78.0px;height:20.00px;line-height:20.00px;padding-left:8.4px">0</div>
<div class="cell" style="left:879.0px;top:139.32px;width:78.0px;height:20.00px;line-height:20.00px;padding-left:8.4px">0</div>
<div class="cell" style="left:961.0px;top:139.32px;width:98.1px;height:20.00px;line-height:20.00px;padding-left:8.4px">0</div>
<div class="cell" style="left:1063.1px;top:139.32px;width:98.2px;height:20.00px;line-height:20.00px;padding-left:8.4px">0</div>
<div class="cell" style="left:1165.3px;top:139.32px;width:78.2px;height:20.00px;line-height:20.00px;padding-left:8.4px">0</div>
<div class="cell" style="left:1247.5px;top:139.32px;width:77.9px;height:20.00px;line-height:20.00px;padding-left:8.4px">5</div>
<div class="abs" style="left:0;top:166.32px;width:100%;height:32.68px;background:#fff;border-bottom:1px solid #e8eaec"></div>
<div class="cell" style="left:-52.8px;top:172.10px;width:150.2px;height:20.00px;line-height:20.00px;padding-left:8.4px">031040500010072</div>
<div class="cell" style="left:101.4px;top:172.10px;width:149.4px;height:20.00px;line-height:20.00px;padding-left:8.4px">联想电脑主机</div>
<div class="cell" style="left:254.8px;top:172.10px;width:149.4px;height:20.00px;line-height:20.00px;padding-left:8.4px">启天M410-B029</div>
<div class="cell" style="left:408.2px;top:172.10px;width:98.3px;height:20.00px;line-height:20.00px;padding-left:8.4px">2015-09-01</div>
<div class="cell" style="left:510.5px;top:172.10px;width:78.1px;height:20.00px;line-height:20.00px;padding-left:8.4px">0</div>
<div class="cell" style="left:592.6px;top:172.10px;width:98.0px;height:20.00px;line-height:20.00px;padding-left:8.4px">0</div>
<div class="cell" style="left:694.6px;top:172.10px;width:98.4px;height:20.00px;line-height:20.00px;padding-left:8.4px">7008.55</div>
<div class="cell" style="left:797.0px;top:172.10px;width:78.0px;height:20.00px;line-height:20.00px;padding-left:8.4px">0</div>
<div class="cell" style="left:879.0px;top:172.10px;width:78.0px;height:20.00px;line-height:20.00px;padding-left:8.4px">0</div>
<div class="cell" style="left:961.0px;top:172.10px;width:98.1px;height:20.00px;line-height:20.00px;padding-left:8.4px">0</div>
<div class="cell" style="left:1063.1px;top:172.10px;width:98.2px;height:20.00px;line-height:20.00px;padding-left:8.4px">0</div>
<div class="cell" style="left:1165.3px;top:172.10px;width:78.2px;height:20.00px;line-height:20.00px;padding-left:8.4px">0</div>
<div class="cell" style="left:1247.5px;top:172.10px;width:77.9px;height:20.00px;line-height:20.00px;padding-left:8.4px">3</div>
<div class="abs" style="left:0;top:199.00px;width:100%;height:32.68px;background:#f8f8f9;border-bottom:1px solid #e8eaec"></div>
<div class="cell" style="left:-52.8px;top:204.87px;width:150.2px;height:20.00px;line-height:20.00px;padding-left:8.4px">031040500010072-1</div>
<div class="cell" style="left:101.4px;top:204.87px;width:149.4px;height:20.00px;line-height:20.00px;padding-left:8.4px">显示器</div>
<div class="cell" style="left:254.8px;top:204.87px;width:149.4px;height:20.00px;line-height:20.00px;padding-left:8.4px">TFT1780PS</div>
<div class="cell" style="left:408.2px;top:204.87px;width:98.3px;height:20.00px;line-height:20.00px;padding-left:8.4px">2011-01-01</div>
<div class="cell" style="left:510.5px;top:204.87px;width:78.1px;height:20.00px;line-height:20.00px;padding-left:8.4px">0</div>
<div class="cell" style="left:592.6px;top:204.87px;width:98.0px;height:20.00px;line-height:20.00px;padding-left:8.4px">0</div>
<div class="cell" style="left:694.6px;top:204.87px;width:98.4px;height:20.00px;line-height:20.00px;padding-left:8.4px">0</div>
<div class="cell" style="left:797.0px;top:204.87px;width:78.0px;height:20.00px;line-height:20.00px;padding-left:8.4px">0</div>
<div class="cell" style="left:879.0px;top:204.87px;width:78.0px;height:20.00px;line-height:20.00px;padding-left:8.4px">0</div>
<div class="cell" style="left:961.0px;top:204.87px;width:98.1px;height:20.00px;line-height:20.00px;padding-left:8.4px">0</div>
<div class="cell" style="left:1063.1px;top:204.87px;width:98.2px;height:20.00px;line-height:20.00px;padding-left:8.4px">0</div>
<div class="cell" style="left:1165.3px;top:204.87px;width:78.2px;height:20.00px;line-height:20.00px;padding-left:8.4px">0</div>
<div class="cell" style="left:1247.5px;top:204.87px;width:77.9px;height:20.00px;line-height:20.00px;padding-left:8.4px">0</div>
<div class="abs" style="left:0;top:231.68px;width:100%;height:32.68px;background:#fff;border-bottom:1px solid #e8eaec"></div>
<div class="cell" style="left:-52.8px;top:237.64px;width:150.2px;height:20.00px;line-height:20.00px;padding-left:8.4px">03104030030062</div>
<div class="cell" style="left:101.4px;top:237.64px;width:149.4px;height:20.00px;line-height:20.00px;padding-left:8.4px">联想电脑主机</div>
<div class="cell" style="left:254.8px;top:237.64px;width:149.4px;height:20.00px;line-height:20.00px;padding-left:8.4px">启天M410-B029</div>
<div class="cell" style="left:408.2px;top:237.64px;width:98.3px;height:20.00px;line-height:20.00px;padding-left:8.4px">2016-08-01</div>
<div class="cell" style="left:510.5px;top:237.64px;width:78.1px;height:20.00px;line-height:20.00px;padding-left:8.4px">0</div>
<div class="cell" style="left:592.6px;top:237.64px;width:98.0px;height:20.00px;line-height:20.00px;padding-left:8.4px">0</div>
<div class="cell" style="left:694.6px;top:237.64px;width:98.4px;height:20.00px;line-height:20.00px;padding-left:8.4px">2136.75</div>
<div class="cell" style="left:797.0px;top:237.64px;width:78.0px;height:20.00px;line-height:20.00px;padding-left:8.4px">0</div>
<div class="cell" style="left:879.0px;top:237.64px;width:78.0px;height:20.00px;line-height:20.00px;padding-left:8.4px">0</div>
<div class="cell" style="left:961.0px;top:237.64px;width:98.1px;height:20.00px;line-height:20.00px;padding-left:8.4px">0</div>
<div class="cell" style="left:1063.1px;top:237.64px;width:98.2px;height:20.00px;line-height:20.00px;padding-left:8.4px">0</div>
<div class="cell" style="left:1165.3px;top:237.64px;width:78.2px;height:20.00px;line-height:20.00px;padding-left:8.4px">0</div>
<div class="cell" style="left:1247.5px;top:237.64px;width:77.9px;height:20.00px;line-height:20.00px;padding-left:8.4px">3</div>
<div class="abs" style="left:0;top:264.36px;width:100%;height:32.68px;background:#f8f8f9;border-bottom:1px solid #e8eaec"></div>
<div class="cell" style="left:-52.8px;top:270.42px;width:150.2px;height:20.00px;line-height:20.00px;padding-left:8.4px">03104030030062-1</div>
<div class="cell" style="left:101.4px;top:270.42px;width:149.4px;height:20.00px;line-height:20.00px;padding-left:8.4px">显示器</div>
<div class="cell" style="left:254.8px;top:270.42px;width:149.4px;height:20.00px;line-height:20.00px;padding-left:8.4px">L1710D</div>
<div class="cell" style="left:408.2px;top:270.42px;width:98.3px;height:20.00px;line-height:20.00px;padding-left:8.4px">2011-01-01</div>
<div class="cell" style="left:510.5px;top:270.42px;width:78.1px;height:20.00px;line-height:20.00px;padding-left:8.4px">0</div>
<div class="cell" style="left:592.6px;top:270.42px;width:98.0px;height:20.00px;line-height:20.00px;padding-left:8.4px">0</div>
<div class="cell" style="left:694.6px;top:270.42px;width:98.4px;height:20.00px;line-height:20.00px;padding-left:8.4px">0</div>
<div class="cell" style="left:797.0px;top:270.42px;width:78.0px;height:20.00px;line-height:20.00px;padding-left:8.4px">0</div>
<div class="cell" style="left:879.0px;top:270.42px;width:78.0px;height:20.00px;line-height:20.00px;padding-left:8.4px">0</div>
<div class="cell" style="left:961.0px;top:270.42px;width:98.1px;height:20.00px;line-height:20.00px;padding-left:8.4px">0</div>
<div class="cell" style="left:1063.1px;top:270.42px;width:98.2px;height:20.00px;line-height:20.00px;padding-left:8.4px">0</div>
<div class="cell" style="left:1165.3px;top:270.42px;width:78.2px;height:20.00px;line-height:20.00px;padding-left:8.4px">0</div>
<div class="cell" style="left:1247.5px;top:270.42px;width:77.9px;height:20.00px;line-height:20.00px;padding-left:8.4px">0</div>
<div class="abs" style="left:0;top:297.04px;width:100%;height:32.68px;background:#fff;border-bottom:1px solid #e8eaec"></div>
<div class="cell" style="left:-52.8px;top:303.19px;width:150.2px;height:20.00px;line-height:20.00px;padding-left:8.4px">201608310001</div>
<div class="cell" style="left:101.4px;top:303.19px;width:149.4px;height:20.00px;line-height:20.00px;padding-left:8.4px">联想电脑主机</div>
<div class="cell" style="left:254.8px;top:303.19px;width:149.4px;height:20.00px;line-height:20.00px;padding-left:8.4px">启天M410-B029</div>
<div class="cell" style="left:408.2px;top:303.19px;width:98.3px;height:20.00px;line-height:20.00px;padding-left:8.4px">2014-01-01</div>
<div class="cell" style="left:510.5px;top:303.19px;width:78.1px;height:20.00px;line-height:20.00px;padding-left:8.4px">0</div>
<div class="cell" style="left:592.6px;top:303.19px;width:98.0px;height:20.00px;line-height:20.00px;padding-left:8.4px">0</div>
<div class="cell" style="left:694.6px;top:303.19px;width:98.4px;height:20.00px;line-height:20.00px;padding-left:8.4px">4600</div>
<div class="cell" style="left:797.0px;top:303.19px;width:78.0px;height:20.00px;line-height:20.00px;padding-left:8.4px">0</div>
<div class="cell" style="left:879.0px;top:303.19px;width:78.0px;height:20.00px;line-height:20.00px;padding-left:8.4px">0</div>
<div class="cell" style="left:961.0px;top:303.19px;width:98.1px;height:20.00px;line-height:20.00px;padding-left:8.4px">0</div>
<div class="cell" style="left:1063.1px;top:303.19px;width:98.2px;height:20.00px;line-height:20.00px;padding-left:8.4px">0</div>
<div class="cell" style="left:1165.3px;top:303.19px;width:78.2px;height:20.00px;line-height:20.00px;padding-left:8.4px">0</div>
<div class="cell" style="left:1247.5px;top:303.19px;width:77.9px;height:20.00px;line-height:20.00px;padding-left:8.4px">3</div>
<div class="abs" style="left:0;top:329.72px;width:100%;height:32.68px;background:#f8f8f9;border-bottom:1px solid #e8eaec"></div>
<div class="cell" style="left:-52.8px;top:335.97px;width:150.2px;height:20.00px;line-height:20.00px;padding-left:8.4px">201608310001-1</div>
<div class="cell" style="left:101.4px;top:335.97px;width:149.4px;height:20.00px;line-height:20.00px;padding-left:8.4px">显示器</div>
<div class="cell" style="left:254.8px;top:335.97px;width:149.4px;height:20.00px;line-height:20.00px;padding-left:8.4px">L1710D</div>
<div class="cell" style="left:408.2px;top:335.97px;width:98.3px;height:20.00px;line-height:20.00px;padding-left:8.4px">2011-01-01</div>
<div class="cell" style="left:510.5px;top:335.97px;width:78.1px;height:20.00px;line-height:20.00px;padding-left:8.4px">0</div>
<div class="cell" style="left:592.6px;top:335.97px;width:98.0px;height:20.00px;line-height:20.00px;padding-left:8.4px">0</div>
<div class="cell" style="left:694.6px;top:335.97px;width:98.4px;height:20.00px;line-height:20.00px;padding-left:8.4px">0</div>
<div class="cell" style="left:797.0px;top:335.97px;width:78.0px;height:20.00px;line-height:20.00px;padding-left:8.4px">0</div>
<div class="cell" style="left:879.0px;top:335.97px;width:78.0px;height:20.00px;line-height:20.00px;padding-left:8.4px">0</div>
<div class="cell" style="left:961.0px;top:335.97px;width:98.1px;height:20.00px;line-height:20.00px;padding-left:8.4px">0</div>
<div class="cell" style="left:1063.1px;top:335.97px;width:98.2px;height:20.00px;line-height:20.00px;padding-left:8.4px">0</div>
<div class="cell" style="left:1165.3px;top:335.97px;width:78.2px;height:20.00px;line-height:20.00px;padding-left:8.4px">0</div>
<div class="cell" style="left:1247.5px;top:335.97px;width:77.9px;height:20.00px;line-height:20.00px;padding-left:8.4px">0</div>
<div class="abs" style="left:0;top:362.40px;width:100%;height:32.68px;background:#fff;border-bottom:1px solid #e8eaec"></div>
<div class="cell" style="left:-52.8px;top:368.74px;width:150.2px;height:20.00px;line-height:20.00px;padding-left:8.4px">111030100030022</div>
<div class="cell" style="left:101.4px;top:368.74px;width:149.4px;height:20.00px;line-height:20.00px;padding-left:8.4px">清障车浙B-1A753</div>
<div class="cell" style="left:254.8px;top:368.74px;width:149.4px;height:20.00px;line-height:20.00px;padding-left:8.4px">LWLDAA5G3HL042474</div>
<div class="cell" style="left:408.2px;top:368.74px;width:98.3px;height:20.00px;line-height:20.00px;padding-left:8.4px">2017-06-01</div>
<div class="cell" style="left:510.5px;top:368.74px;width:78.1px;height:20.00px;line-height:20.00px;padding-left:8.4px">0</div>
<div class="cell" style="left:592.6px;top:368.74px;width:98.0px;height:20.00px;line-height:20.00px;padding-left:8.4px">5805.56</div>
<div class="cell" style="left:694.6px;top:368.74px;width:98.4px;height:20.00px;line-height:20.00px;padding-left:8.4px">195555.56</div>
<div class="cell" style="left:797.0px;top:368.74px;width:78.0px;height:20.00px;line-height:20.00px;padding-left:8.4px">137398.16</div>
<div class="cell" style="left:879.0px;top:368.74px;width:78.0px;height:20.00px;line-height:20.00px;padding-left:8.4px">58157.4</div>
<div class="cell" style="left:961.0px;top:368.74px;width:98.1px;height:20.00px;line-height:20.00px;padding-left:8.4px">1935.19</div>
<div class="cell" style="left:1063.1px;top:368.74px;width:98.2px;height:20.00px;line-height:20.00px;padding-left:8.4px">0</div>
<div class="cell" style="left:1165.3px;top:368.74px;width:78.2px;height:20.00px;line-height:20.00px;padding-left:8.4px">0</div>
<div class="cell" style="left:1247.5px;top:368.74px;width:77.9px;height:20.00px;line-height:20.00px;padding-left:8.4px">8</div>
<div class="abs" style="left:0;top:395.08px;width:100%;height:32.68px;background:#f8f8f9;border-bottom:1px solid #e8eaec"></div>
<div class="cell" style="left:-52.8px;top:401.51px;width:150.2px;height:20.00px;line-height:20.00px;padding-left:8.4px">111030100030023</div>
<div class="cell" style="left:101.4px;top:401.51px;width:149.4px;height:20.00px;line-height:20.00px;padding-left:8.4px">清障浙B-Y0731</div>
<div class="cell" style="left:254.8px;top:401.51px;width:149.4px;height:20.00px;line-height:20.00px;padding-left:8.4px">LWLDAA5G0HL061998</div>
<div class="cell" style="left:408.2px;top:401.51px;width:98.3px;height:20.00px;line-height:20.00px;padding-left:8.4px">2018-01-01</div>
<div class="cell" style="left:510.5px;top:401.51px;width:78.1px;height:20.00px;line-height:20.00px;padding-left:8.4px">0</div>
<div class="cell" style="left:592.6px;top:401.51px;width:98.0px;height:20.00px;line-height:20.00px;padding-left:8.4px">5805.55</div>
<div class="cell" style="left:694.6px;top:401.51px;width:98.4px;height:20.00px;line-height:20.00px;padding-left:8.4px">195555.56</div>
<div class="cell" style="left:797.0px;top:401.51px;width:78.0px;height:20.00px;line-height:20.00px;padding-left:8.4px">123851.86</div>
<div class="cell" style="left:879.0px;top:401.51px;width:78.0px;height:20.00px;line-height:20.00px;padding-left:8.4px">71703.7</div>
<div class="cell" style="left:961.0px;top:401.51px;width:98.1px;height:20.00px;line-height:20.00px;padding-left:8.4px">1935.18</div>
<div class="cell" style="left:1063.1px;top:401.51px;width:98.2px;height:20.00px;line-height:20.00px;padding-left:8.4px">0</div>
<div class="cell" style="left:1165.3px;top:401.51px;width:78.2px;height:20.00px;line-height:20.00px;padding-left:8.4px">0</div>
<div class="cell" style="left:1247.5px;top:401.51px;width:77.9px;height:20.00px;line-height:20.00px;padding-left:8.4px">8</div>
<div class="abs" style="left:0;top:427.76px;width:100%;height:32.68px;background:#fff;border-bottom:1px solid #e8eaec"></div>
<div class="cell" style="left:-52.8px;top:434.29px;width:150.2px;height:20.00px;line-height:20.00px;padding-left:8.4px">031040500010083</div>
<div class="cell" style="left:101.4px;top:434.29px;width:149.4px;height:20.00px;line-height:20.00px;padding-left:8.4px">电脑主机</div>
<div class="cell" style="left:254.8px;top:434.29px;width:149.4px;height:20.00px;line-height:20.00px;padding-left:8.4px">ThinkCentre M4500K-...</div>
<div class="cell" style="left:408.2px;top:434.29px;width:98.3px;height:20.00px;line-height:20.00px;padding-left:8.4px">2019-01-01</div>
<div class="cell" style="left:510.5px;top:434.29px;width:78.1px;height:20.00px;line-height:20.00px;padding-left:8.4px">0</div>
<div class="cell" style="left:592.6px;top:434.29px;width:98.0px;height:20.00px;line-height:20.00px;padding-left:8.4px">0</div>
<div class="cell" style="left:694.6px;top:434.29px;width:98.4px;height:20.00px;line-height:20.00px;padding-left:8.4px">6465.52</div>
<div class="cell" style="left:797.0px;top:434.29px;width:78.0px;height:20.00px;line-height:20.00px;padding-left:8.4px">0</div>
<div class="cell" style="left:879.0px;top:434.29px;width:78.0px;height:20.00px;line-height:20.00px;padding-left:8.4px">0</div>
<div class="cell" style="left:961.0px;top:434.29px;width:98.1px;height:20.00px;line-height:20.00px;padding-left:8.4px">0</div>
<div class="cell" style="left:1063.1px;top:434.29px;width:98.2px;height:20.00px;line-height:20.00px;padding-left:8.4px">0</div>
<div class="cell" style="left:1165.3px;top:434.29px;width:78.2px;height:20.00px;line-height:20.00px;padding-left:8.4px">0</div>
<div class="cell" style="left:1247.5px;top:434.29px;width:77.9px;height:20.00px;line-height:20.00px;padding-left:8.4px">3</div>
<div class="abs" style="left:0;top:460.44px;width:100%;height:32.68px;background:#f8f8f9;border-bottom:1px solid #e8eaec"></div>
<div class="cell" style="left:-52.8px;top:467.06px;width:150.2px;height:20.00px;line-height:20.00px;padding-left:8.4px">031040500010083-1</div>
<div class="cell" style="left:101.4px;top:467.06px;width:149.4px;height:20.00px;line-height:20.00px;padding-left:8.4px">显示器</div>
<div class="cell" style="left:254.8px;top:467.06px;width:149.4px;height:20.00px;line-height:20.00px;padding-left:8.4px">L1710D</div>
<div class="cell" style="left:408.2px;top:467.06px;width:98.3px;height:20.00px;line-height:20.00px;padding-left:8.4px">2019-01-01</div>
<div class="cell" style="left:510.5px;top:467.06px;width:78.1px;height:20.00px;line-height:20.00px;padding-left:8.4px">0</div>
<div class="cell" style="left:592.6px;top:467.06px;width:98.0px;height:20.00px;line-height:20.00px;padding-left:8.4px">0</div>
<div class="cell" style="left:694.6px;top:467.06px;width:98.4px;height:20.00px;line-height:20.00px;padding-left:8.4px">0</div>
<div class="cell" style="left:797.0px;top:467.06px;width:78.0px;height:20.00px;line-height:20.00px;padding-left:8.4px">0</div>
<div class="cell" style="left:879.0px;top:467.06px;width:78.0px;height:20.00px;line-height:20.00px;padding-left:8.4px">0</div>
<div class="cell" style="left:961.0px;top:467.06px;width:98.1px;height:20.00px;line-height:20.00px;padding-left:8.4px">0</div>
<div class="cell" style="left:1063.1px;top:467.06px;width:98.2px;height:20.00px;line-height:20.00px;padding-left:8.4px">0</div>
<div class="cell" style="left:1165.3px;top:467.06px;width:78.2px;height:20.00px;line-height:20.00px;padding-left:8.4px">0</div>
<div class="cell" style="left:1247.5px;top:467.06px;width:77.9px;height:20.00px;line-height:20.00px;padding-left:8.4px">0</div>
<div class="abs" style="left:0;top:493.12px;width:100%;height:32.68px;background:#fff;border-bottom:1px solid #e8eaec"></div>
<div class="cell" style="left:-52.8px;top:499.84px;width:150.2px;height:20.00px;line-height:20.00px;padding-left:8.4px">111030100030024</div>
<div class="cell" style="left:101.4px;top:499.84px;width:149.4px;height:20.00px;line-height:20.00px;padding-left:8.4px">清障车浙B-97252</div>
<div class="cell" style="left:254.8px;top:499.84px;width:149.4px;height:20.00px;line-height:20.00px;padding-left:8.4px">LWLDABUG9ML043419</div>
<div class="cell" style="left:408.2px;top:499.84px;width:98.3px;height:20.00px;line-height:20.00px;padding-left:8.4px">2021-04-01</div>
<div class="cell" style="left:510.5px;top:499.84px;width:78.1px;height:20.00px;line-height:20.00px;padding-left:8.4px">0</div>
<div class="cell" style="left:592.6px;top:499.84px;width:98.0px;height:20.00px;line-height:20.00px;padding-left:8.4px">5866.56</div>
<div class="cell" style="left:694.6px;top:499.84px;width:98.4px;height:20.00px;line-height:20.00px;padding-left:8.4px">197610.62</div>
<div class="cell" style="left:797.0px;top:499.84px;width:78.0px;height:20.00px;line-height:20.00px;padding-left:8.4px">48888</div>
<div class="cell" style="left:879.0px;top:499.84px;width:78.0px;height:20.00px;line-height:20.00px;padding-left:8.4px">148722.62</div>
<div class="cell" style="left:961.0px;top:499.84px;width:98.1px;height:20.00px;line-height:20.00px;padding-left:8.4px">1955.52</div>
<div class="cell" style="left:1063.1px;top:499.84px;width:98.2px;height:20.00px;line-height:20.00px;padding-left:8.4px">0</div>
<div class="cell" style="left:1165.3px;top:499.84px;width:78.2px;height:20.00px;line-height:20.00px;padding-left:8.4px">0</div>
<div class="cell" style="left:1247.5px;top:499.84px;width:77.9px;height:20.00px;line-height:20.00px;padding-left:8.4px">8</div>
<div class="abs" style="left:0;top:525.80px;width:100%;height:32.68px;background:#f8f8f9;border-bottom:1px solid #e8eaec"></div>
<div class="cell" style="left:-52.8px;top:532.61px;width:150.2px;height:20.00px;line-height:20.00px;padding-left:8.4px">031050200030013</div>
<div class="cell" style="left:101.4px;top:532.61px;width:149.4px;height:20.00px;line-height:20.00px;padding-left:8.4px">金属制品集装箱</div>
<div class="cell" style="left:254.8px;top:532.61px;width:149.4px;height:20.00px;line-height:20.00px;padding-left:8.4px">集装箱</div>
<div class="cell" style="left:408.2px;top:532.61px;width:98.3px;height:20.00px;line-height:20.00px;padding-left:8.4px">2021-04-01</div>
<div class="cell" style="left:510.5px;top:532.61px;width:78.1px;height:20.00px;line-height:20.00px;padding-left:8.4px">0</div>
<div class="cell" style="left:592.6px;top:532.61px;width:98.0px;height:20.00px;line-height:20.00px;padding-left:8.4px">470.3</div>
<div class="cell" style="left:694.6px;top:532.61px;width:98.4px;height:20.00px;line-height:20.00px;padding-left:8.4px">5940.59</div>
<div class="cell" style="left:797.0px;top:532.61px;width:78.0px;height:20.00px;line-height:20.00px;padding-left:8.4px">3919.15</div>
<div class="cell" style="left:879.0px;top:532.61px;width:78.0px;height:20.00px;line-height:20.00px;padding-left:8.4px">2021.44</div>
<div class="cell" style="left:961.0px;top:532.61px;width:98.1px;height:20.00px;line-height:20.00px;padding-left:8.4px">156.77</div>
<div class="cell" style="left:1063.1px;top:532.61px;width:98.2px;height:20.00px;line-height:20.00px;padding-left:8.4px">0</div>
<div class="cell" style="left:1165.3px;top:532.61px;width:78.2px;height:20.00px;line-height:20.00px;padding-left:8.4px">0</div>
<div class="cell" style="left:1247.5px;top:532.61px;width:77.9px;height:20.00px;line-height:20.00px;padding-left:8.4px">3</div>
<div class="abs" style="left:0;top:558.48px;width:100%;height:32.68px;background:#fff;border-bottom:1px solid #e8eaec"></div>
<div class="cell" style="left:-52.8px;top:565.38px;width:150.2px;height:20.00px;line-height:20.00px;padding-left:8.4px">111030100030025</div>
<div class="cell" style="left:101.4px;top:565.38px;width:149.4px;height:20.00px;line-height:20.00px;padding-left:8.4px">清障车浙B-97290</div>
<div class="cell" style="left:254.8px;top:565.38px;width:149.4px;height:20.00px;line-height:20.00px;padding-left:8.4px">LWLDABUGXML043056</div>
<div class="cell" style="left:408.2px;top:565.38px;width:98.3px;height:20.00px;line-height:20.00px;padding-left:8.4px">2021-04-01</div>
<div class="cell" style="left:510.5px;top:565.38px;width:78.1px;height:20.00px;line-height:20.00px;padding-left:8.4px">0</div>
<div class="cell" style="left:592.6px;top:565.38px;width:98.0px;height:20.00px;line-height:20.00px;padding-left:8.4px">5866.56</div>
<div class="cell" style="left:694.6px;top:565.38px;width:98.4px;height:20.00px;line-height:20.00px;padding-left:8.4px">197610.62</div>
<div class="cell" style="left:797.0px;top:565.38px;width:78.0px;height:20.00px;line-height:20.00px;padding-left:8.4px">48888</div>
<div class="cell" style="left:879.0px;top:565.38px;width:78.0px;height:20.00px;line-height:20.00px;padding-left:8.4px">148722.62</div>
<div class="cell" style="left:961.0px;top:565.38px;width:98.1px;height:20.00px;line-height:20.00px;padding-left:8.4px">1955.52</div>
<div class="cell" style="left:1063.1px;top:565.38px;width:98.2px;height:20.00px;line-height:20.00px;padding-left:8.4px">0</div>
<div class="cell" style="left:1165.3px;top:565.38px;width:78.2px;height:20.00px;line-height:20.00px;padding-left:8.4px">0</div>
<div class="cell" style="left:1247.5px;top:565.38px;width:77.9px;height:20.00px;line-height:20.00px;padding-left:8.4px">8</div>
<div class="abs" style="left:0;top:591.16px;width:100%;height:32.68px;background:#f8f8f9;border-bottom:1px solid #e8eaec"></div>
<div class="cell" style="left:-52.8px;top:598.16px;width:150.2px;height:20.00px;line-height:20.00px;padding-left:8.4px">111030100030026</div>
<div class="cell" style="left:101.4px;top:598.16px;width:149.4px;height:20.00px;line-height:20.00px;padding-left:8.4px">清障车浙B-97299</div>
<div class="cell" style="left:254.8px;top:598.16px;width:149.4px;height:20.00px;line-height:20.00px;padding-left:8.4px">LWLDABUG7ML043418</div>
<div class="cell" style="left:408.2px;top:598.16px;width:98.3px;height:20.00px;line-height:20.00px;padding-left:8.4px">2021-04-01</div>
<div class="cell" style="left:510.5px;top:598.16px;width:78.1px;height:20.00px;line-height:20.00px;padding-left:8.4px">0</div>
<div class="cell" style="left:592.6px;top:598.16px;width:98.0px;height:20.00px;line-height:20.00px;padding-left:8.4px">5866.56</div>
<div class="cell" style="left:694.6px;top:598.16px;width:98.4px;height:20.00px;line-height:20.00px;padding-left:8.4px">197610.62</div>
<div class="cell" style="left:797.0px;top:598.16px;width:78.0px;height:20.00px;line-height:20.00px;padding-left:8.4px">48888</div>
<div class="cell" style="left:879.0px;top:598.16px;width:78.0px;height:20.00px;line-height:20.00px;padding-left:8.4px">148722.62</div>
<div class="cell" style="left:961.0px;top:598.16px;width:98.1px;height:20.00px;line-height:20.00px;padding-left:8.4px">1955.52</div>
<div class="cell" style="left:1063.1px;top:598.16px;width:98.2px;height:20.00px;line-height:20.00px;padding-left:8.4px">0</div>
<div class="cell" style="left:1165.3px;top:598.16px;width:78.2px;height:20.00px;line-height:20.00px;padding-left:8.4px">0</div>
<div class="cell" style="left:1247.5px;top:598.16px;width:77.9px;height:20.00px;line-height:20.00px;padding-left:8.4px">8</div>
<div class="abs" style="left:0;top:623.84px;width:100%;height:32.68px;background:#fff;border-bottom:1px solid #e8eaec"></div>
<div class="cell" style="left:-52.8px;top:630.93px;width:150.2px;height:20.00px;line-height:20.00px;padding-left:8.4px">111030100030027</div>
<div class="cell" style="left:101.4px;top:630.93px;width:149.4px;height:20.00px;line-height:20.00px;padding-left:8.4px">清障车浙B-1A291</div>
<div class="cell" style="left:254.8px;top:630.93px;width:149.4px;height:20.00px;line-height:20.00px;padding-left:8.4px">LWLDABUG4NL045550</div>
<div class="cell" style="left:408.2px;top:630.93px;width:98.3px;height:20.00px;line-height:20.00px;padding-left:8.4px">2022-07-01</div>
<div class="cell" style="left:510.5px;top:630.93px;width:78.1px;height:20.00px;line-height:20.00px;padding-left:8.4px">0</div>
<div class="cell" style="left:592.6px;top:630.93px;width:98.0px;height:20.00px;line-height:20.00px;padding-left:8.4px">5722.08</div>
<div class="cell" style="left:694.6px;top:630.93px;width:98.4px;height:20.00px;line-height:20.00px;padding-left:8.4px">192743.36</div>
<div class="cell" style="left:797.0px;top:630.93px;width:78.0px;height:20.00px;line-height:20.00px;padding-left:8.4px">19073.6</div>
<div class="cell" style="left:879.0px;top:630.93px;width:78.0px;height:20.00px;line-height:20.00px;padding-left:8.4px">173669.76</div>
<div class="cell" style="left:961.0px;top:630.93px;width:98.1px;height:20.00px;line-height:20.00px;padding-left:8.4px">1907.36</div>
<div class="cell" style="left:1063.1px;top:630.93px;width:98.2px;height:20.00px;line-height:20.00px;padding-left:8.4px">0</div>
<div class="cell" style="left:1165.3px;top:630.93px;width:78.2px;height:20.00px;line-height:20.00px;padding-left:8.4px">0</div>
<div class="cell" style="left:1247.5px;top:630.93px;width:77.9px;height:20.00px;line-height:20.00px;padding-left:8.4px">8</div>
<div class="abs" style="left:0;top:656.52px;width:100%;height:32.68px;background:#f8f8f9;border-bottom:1px solid #e8eaec"></div>
<div class="cell" style="left:-52.8px;top:663.71px;width:150.2px;height:20.00px;line-height:20.00px;padding-left:8.4px">111030100030028</div>
<div class="cell" style="left:101.4px;top:663.71px;width:149.4px;height:20.00px;line-height:20.00px;padding-left:8.4px">清障车浙B-1A922</div>
<div class="cell" style="left:254.8px;top:663.71px;width:149.4px;height:20.00px;line-height:20.00px;padding-left:8.4px">LWLDABUG5NL045573</div>
<div class="cell" style="left:408.2px;top:663.71px;width:98.3px;height:20.00px;line-height:20.00px;padding-left:8.4px">2022-07-01</div>
<div class="cell" style="left:510.5px;top:663.71px;width:78.1px;height:20.00px;line-height:20.00px;padding-left:8.4px">0</div>
<div class="cell" style="left:592.6px;top:663.71px;width:98.0px;height:20.00px;line-height:20.00px;padding-left:8.4px">5722.08</div>
<div class="cell" style="left:694.6px;top:663.71px;width:98.4px;height:20.00px;line-height:20.00px;padding-left:8.4px">192743.36</div>
<div class="cell" style="left:797.0px;top:663.71px;width:78.0px;height:20.00px;line-height:20.00px;padding-left:8.4px">19073.6</div>
<div class="cell" style="left:879.0px;top:663.71px;width:78.0px;height:20.00px;line-height:20.00px;padding-left:8.4px">173669.76</div>
<div class="cell" style="left:961.0px;top:663.71px;width:98.1px;height:20.00px;line-height:20.00px;padding-left:8.4px">1907.36</div>
<div class="cell" style="left:1063.1px;top:663.71px;width:98.2px;height:20.00px;line-height:20.00px;padding-left:8.4px">0</div>
<div class="cell" style="left:1165.3px;top:663.71px;width:78.2px;height:20.00px;line-height:20.00px;padding-left:8.4px">0</div>
<div class="cell" style="left:1247.5px;top:663.71px;width:77.9px;height:20.00px;line-height:20.00px;padding-left:8.4px">8</div>
<div class="abs" style="left:0;top:712.8px;width:100%;height:32.8px;background:#f8f8f9;border-bottom:1px solid #e8eaec"></div>
<div class="cell" style="left:592.6px;top:712.8px;width:102.0px;height:32.9px;line-height:32px;padding-left:8.4px;overflow:visible">4672883.93</div>
<div class="cell" style="left:694.6px;top:712.8px;width:102.4px;height:32.9px;line-height:32px;padding-left:8.4px;overflow:visible">496669933.37</div>
<div class="cell" style="left:961.0px;top:712.8px;width:102.1px;height:32.9px;line-height:32px;padding-left:8.4px;overflow:visible">1965276.42</div>
<div class="cell" style="left:1063.1px;top:712.8px;width:102.2px;height:32.9px;line-height:32px;padding-left:8.4px;overflow:visible">1722400.55</div>
<div class="cell" style="left:1165.3px;top:712.8px;width:82.2px;height:32.9px;line-height:32px;padding-left:8.4px;overflow:visible">22863.37</div>
<div class="abs" style="left:100.9px;top:0;width:1px;height:100%;background:#eceef1"></div>
<div class="abs" style="left:254.3px;top:0;width:1px;height:100%;background:#eceef1"></div>
<div class="abs" style="left:407.7px;top:0;width:1px;height:100%;background:#eceef1"></div>
<div class="abs" style="left:510.0px;top:0;width:1px;height:100%;background:#eceef1"></div>
<div class="abs" style="left:592.1px;top:0;width:1px;height:100%;background:#eceef1"></div>
<div class="abs" style="left:694.1px;top:0;width:1px;height:100%;background:#eceef1"></div>
<div class="abs" style="left:796.5px;top:0;width:1px;height:100%;background:#eceef1"></div>
<div class="abs" style="left:878.5px;top:0;width:1px;height:100%;background:#eceef1"></div>
<div class="abs" style="left:960.5px;top:0;width:1px;height:100%;background:#eceef1"></div>
<div class="abs" style="left:1062.6px;top:0;width:1px;height:100%;background:#eceef1"></div>
<div class="abs" style="left:1164.8px;top:0;width:1px;height:100%;background:#eceef1"></div>
<div class="abs" style="left:1247.0px;top:0;width:1px;height:100%;background:#eceef1"></div>
<div class="abs" style="left:1328.9px;top:0;width:1px;height:100%;background:#eceef1"></div>
<div class="abs" style="left:0;top:690.8px;width:100%;height:22px;background:#f1f1f1"></div>
<div class="abs" style="left:325.5px;top:691.8px;width:982.9px;height:19.4px;background:#c1c1c1"></div>
<svg class="abs" style="left:7.4px;top:696.6px" width="6" height="10.5"><path d="M6 0 L0.3 5.25 L6 10.5Z" fill="#505050"/></svg>
<svg class="abs" style="left:1316.2px;top:696.2px" width="6" height="10.5"><path d="M0 0 L5.7 5.25 L0 10.5Z" fill="#a3a3a3"/></svg>
</div>
</div>
</body></html>
